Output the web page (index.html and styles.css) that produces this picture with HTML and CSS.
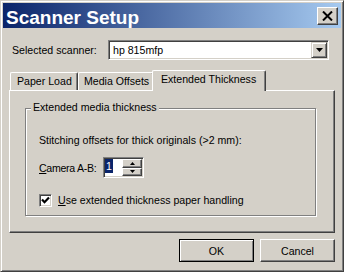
FILE: index.html
```html
<!DOCTYPE html>
<html>
<head>
<meta charset="utf-8">
<link rel="stylesheet" href="styles.css">
</head>
<body>
<div class="window">
  <div class="titlebar">
    <span class="title">Scanner Setup</span>
    <div class="close">
      <svg width="11" height="10" viewBox="0 0 11 10"><path d="M1 0.5 L10 9.5 M10 0.5 L1 9.5" stroke="#000" stroke-width="2" fill="none"/></svg>
    </div>
  </div>
  <div class="content">
    <div class="scanner-row">
      <span class="label">Selected scanner:</span>
      <div class="combo">
        <span class="combo-value">hp 815mfp</span>
        <span class="combo-btn"><svg width="7" height="4" viewBox="0 0 7 4"><path d="M0 0 H7 L3.5 4 Z" fill="#000"/></svg></span>
      </div>
    </div>
    <div class="tabs">
      <div class="tab tab-paper">Paper Load</div>
      <div class="tab tab-media">Media Offsets</div>
      <div class="tab active">Extended Thickness</div>
    </div>
    <div class="panel">
      <div class="group">
        <div class="legend">Extended media thickness</div>
        <div class="note">Stitching offsets for thick originals (&gt;2 mm):</div>
        <div class="camera-row">
          <span class="camera-label"><u>C</u>amera A-B:</span>
          <div class="spin">
            <div class="spin-edit"><span class="sel">1</span></div>
            <div class="spin-btns">
              <span class="spin-btn"><svg width="5" height="3" viewBox="0 0 5 3"><path d="M2.5 0 L5 3 H0 Z" fill="#000"/></svg></span>
              <span class="spin-btn"><svg width="5" height="3" viewBox="0 0 5 3"><path d="M0 0 H5 L2.5 3 Z" fill="#000"/></svg></span>
            </div>
          </div>
        </div>
        <div class="check-row">
          <span class="checkbox"><svg width="9" height="9" viewBox="0 0 9 9"><path d="M1 3.5 L3.5 6.2 L8 1.5" stroke="#000" stroke-width="2.2" fill="none"/></svg></span>
          <span class="check-label"><u>U</u>se extended thickness paper handling</span>
        </div>
      </div>
    </div>
    <div class="buttons">
      <div class="btn default">OK</div>
      <div class="btn">Cancel</div>
    </div>
  </div>
</div>
</body>
</html>
```
FILE: styles.css
```css
html, body {
  margin: 0;
  padding: 0;
  background: #d4d0c8;
}
body {
  font-family: "Liberation Sans", Arial, sans-serif;
  font-size: 10.6px;
  color: #000;
}
.window {
  width: 344px;
  height: 272px;
  box-sizing: border-box;
  background: #d4d0c8;
  border: 1px solid;
  border-color: #d4d0c8 #404040 #404040 #d4d0c8;
  box-shadow: inset 1px 1px #fff, inset -1px -1px #808080;
  padding: 2px;
  display: flex;
  flex-direction: column;
}
.titlebar {
  height: 25px;
  flex: none;
  background: linear-gradient(to right, #0a246a, #a6caf0);
  display: flex;
  align-items: center;
  padding: 0 3px 0 3px;
}
.title {
  flex: 1;
  color: #fff;
  font-weight: bold;
  font-size: 19px;
  line-height: 21px;
  padding-top: 4px;
  align-self: flex-start;
  white-space: nowrap;
}
.close {
  width: 21px;
  height: 18px;
  box-sizing: border-box;
  background: #d4d0c8;
  border: 1px solid;
  border-color: #fff #404040 #404040 #fff;
  box-shadow: inset -1px -1px #808080;
  display: flex;
  align-items: center;
  justify-content: center;
}
.close svg { display: block; }
.content {
  flex: 1;
  padding: 12px 6px 0 6px;
  display: flex;
  flex-direction: column;
}
.scanner-row {
  display: flex;
  align-items: center;
  height: 20px;
}
.label {
  width: 96px;
  margin-left: 3px;
  white-space: nowrap;
}
.combo {
  width: 221px;
  height: 20px;
  box-sizing: border-box;
  background: #fff;
  border: 1px solid;
  border-color: #808080 #fff #fff #808080;
  box-shadow: inset 1px 1px #404040, inset -1px -1px #d4d0c8;
  padding: 1px;
  display: flex;
}
.combo-value {
  flex: 1;
  padding-left: 3px;
  line-height: 16px;
}
.combo-btn {
  width: 16px;
  height: 16px;
  box-sizing: border-box;
  background: #d4d0c8;
  border: 1px solid;
  border-color: #d4d0c8 #404040 #404040 #d4d0c8;
  box-shadow: inset 1px 1px #fff, inset -1px -1px #808080;
  display: flex;
  align-items: center;
  justify-content: center;
}
.combo-btn svg { display: block; }
.tabs {
  margin-top: 10px;
  height: 20px;
  display: flex;
  align-items: flex-end;
  padding-left: 1px;
  position: relative;
  z-index: 1;
}
.tab {
  height: 18px;
  box-sizing: border-box;
  line-height: 17px;
  border-top: 1px solid #fff;
  border-left: 1px solid #fff;
  border-right: 1px solid #404040;
  box-shadow: inset -1px 0 #808080;
  border-radius: 2px 2px 0 0;
  background: #d4d0c8;
  white-space: nowrap;
  overflow: hidden;
}
.tab-paper {
  width: 68px;
  padding-left: 6px;
}
.tab-media {
  width: 76px;
  padding-left: 5px;
}
.tab.active {
  width: 114px;
  height: 21px;
  margin: 0 -2px -1px -2px;
  padding-left: 8px;
  line-height: 16px;
  position: relative;
  z-index: 2;
}
.panel {
  height: 143px;
  box-sizing: border-box;
  border: 1px solid;
  border-color: #fff #404040 #404040 #fff;
  box-shadow: inset -1px -1px #808080;
  padding: 17px 18px 0 15px;
}
.group {
  height: 108px;
  box-sizing: border-box;
  border: 1px solid #808080;
  box-shadow: inset 1px 1px #fff, 1px 1px #fff;
  padding: 0 0 0 13px;
}
.legend {
  display: inline-block;
  margin: -8px 0 0 -8px;
  padding: 0 2px;
  line-height: 13px;
  background: #d4d0c8;
  vertical-align: top;
}
.note {
  margin-top: 13px;
  line-height: 13px;
  white-space: nowrap;
}
.camera-row {
  margin-top: 10px;
  display: flex;
  align-items: center;
  height: 21px;
}
.camera-label {
  width: 64px;
  white-space: nowrap;
  letter-spacing: -0.3px;
}
.spin {
  width: 41px;
  height: 21px;
  box-sizing: border-box;
  background: #fff;
  border: 1px solid;
  border-color: #808080 #fff #fff #808080;
  box-shadow: inset 1px 1px #404040, inset -1px -1px #d4d0c8;
  padding: 1px;
  display: flex;
}
.spin-edit {
  flex: 1;
  display: flex;
  align-items: flex-start;
}
.sel {
  background: #0a246a;
  color: #fff;
  line-height: 14px;
  padding: 0 1px;
}
.spin-btns {
  width: 20px;
  display: flex;
  flex-direction: column;
}
.spin-btn {
  flex: 1;
  box-sizing: border-box;
  background: #d4d0c8;
  border: 1px solid;
  border-color: #fff #404040 #404040 #fff;
  box-shadow: inset -1px -1px #808080;
  display: flex;
  align-items: center;
  justify-content: center;
}
.spin-btn svg { display: block; }
.check-row {
  margin-top: 16px;
  display: flex;
  align-items: center;
  height: 13px;
}
.checkbox {
  width: 13px;
  height: 13px;
  box-sizing: border-box;
  background: #fff;
  border: 1px solid;
  border-color: #808080 #fff #fff #808080;
  box-shadow: inset 1px 1px #404040, inset -1px -1px #d4d0c8;
  display: flex;
  align-items: center;
  justify-content: center;
  margin-right: 6px;
}
.checkbox svg { display: block; }
.check-label {
  white-space: nowrap;
  line-height: 13px;
}
.buttons {
  margin-top: 6px;
  display: flex;
  justify-content: flex-end;
  gap: 6px;
}
.btn {
  width: 75px;
  height: 23px;
  box-sizing: border-box;
  border: 1px solid;
  border-color: #fff #404040 #404040 #fff;
  box-shadow: inset -1px -1px #808080;
  display: flex;
  align-items: center;
  justify-content: center;
}
.btn.default {
  border-color: #000;
  box-shadow: inset 1px 1px #fff, inset -1px -1px #808080;
}
```
